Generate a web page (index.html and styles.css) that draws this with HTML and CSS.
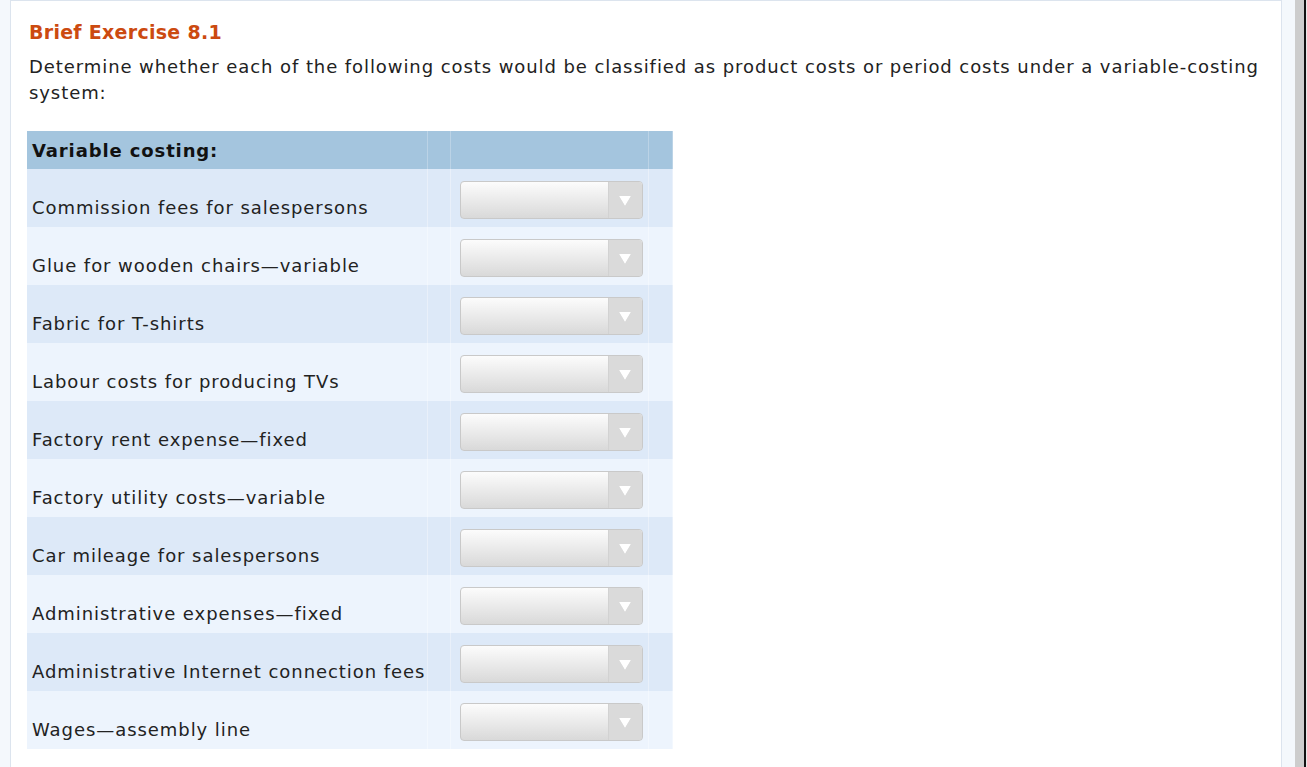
FILE: index.html
```html
<!DOCTYPE html>
<html>
<head>
<meta charset="utf-8">
<link rel="stylesheet" href="styles.css">
</head>
<body>
<div class="frame">
  <div class="panel">
    <h1 class="title">Brief Exercise 8.1</h1>
    <p class="intro">Determine whether each of the following costs would be classified as product costs or period costs under a variable-costing system:</p>
    <table class="grid">
      <thead>
        <tr><th class="c1">Variable costing:</th><th class="c2"></th><th class="c3"></th><th class="c4"></th></tr>
      </thead>
      <tbody>
        <tr><td class="c1">Commission fees for salespersons</td><td class="c2"></td><td class="c3"><div class="sel"><span class="arr"></span></div></td><td class="c4"></td></tr>
        <tr><td class="c1">Glue for wooden chairs—variable</td><td class="c2"></td><td class="c3"><div class="sel"><span class="arr"></span></div></td><td class="c4"></td></tr>
        <tr><td class="c1">Fabric for T-shirts</td><td class="c2"></td><td class="c3"><div class="sel"><span class="arr"></span></div></td><td class="c4"></td></tr>
        <tr><td class="c1">Labour costs for producing TVs</td><td class="c2"></td><td class="c3"><div class="sel"><span class="arr"></span></div></td><td class="c4"></td></tr>
        <tr><td class="c1">Factory rent expense—fixed</td><td class="c2"></td><td class="c3"><div class="sel"><span class="arr"></span></div></td><td class="c4"></td></tr>
        <tr><td class="c1">Factory utility costs—variable</td><td class="c2"></td><td class="c3"><div class="sel"><span class="arr"></span></div></td><td class="c4"></td></tr>
        <tr><td class="c1">Car mileage for salespersons</td><td class="c2"></td><td class="c3"><div class="sel"><span class="arr"></span></div></td><td class="c4"></td></tr>
        <tr><td class="c1">Administrative expenses—fixed</td><td class="c2"></td><td class="c3"><div class="sel"><span class="arr"></span></div></td><td class="c4"></td></tr>
        <tr><td class="c1">Administrative Internet connection fees</td><td class="c2"></td><td class="c3"><div class="sel"><span class="arr"></span></div></td><td class="c4"></td></tr>
        <tr><td class="c1">Wages—assembly line</td><td class="c2"></td><td class="c3"><div class="sel"><span class="arr"></span></div></td><td class="c4"></td></tr>
      </tbody>
    </table>
  </div>
  <div class="gutter"></div>
  <div class="scroll"></div>
  <div class="edge"></div>
  <div class="tail"></div>
</div>
</body>
</html>
```
FILE: styles.css
```css
html, body {
  margin: 0;
  padding: 0;
  background: #f4f8fc;
}
body {
  font-family: "DejaVu Sans", Verdana, sans-serif;
  color: #222;
}
.frame {
  display: flex;
  height: 767px;
  overflow: hidden;
  padding-left: 10px;
}
.panel {
  width: 1272px;
  flex: none;
  background: #fff;
  border: 1px solid #dce4ee;
  border-bottom: none;
  padding: 0 0 0 16px;
  box-sizing: border-box;
}
.gutter {
  width: 13px;
  flex: none;
  background: #f4f8fc;
}
.scroll {
  width: 9px;
  flex: none;
  background: #cdcdcd;
}
.edge {
  width: 2px;
  flex: none;
  background: #111;
}
.tail {
  width: 1px;
  flex: none;
  background: #e8e8e8;
}
.title {
  margin: 19px 0 0 2px;
  font-size: 19px;
  letter-spacing: 0.28px;
  font-weight: bold;
  color: #cc4a10;
  line-height: 24px;
}
.intro {
  margin: 10px 0 0 2px;
  font-size: 18px;
  letter-spacing: 0.92px;
  line-height: 26px;
  width: 1245px;
}
.grid {
  margin-top: 25px;
  border-collapse: collapse;
  font-size: 18px;
  letter-spacing: 0.94px;
}
.grid th {
  background: #a4c5de;
  height: 38px;
  padding: 0;
  text-align: left;
  font-weight: bold;
  color: #111;
  letter-spacing: 0.88px;
  box-shadow: inset -1px 0 0 rgba(255,255,255,0.25);
}
.grid th.c1 { padding-left: 5px; }
.grid td {
  height: 58px;
  padding: 0;
  box-shadow: inset -1px 0 0 rgba(255,255,255,0.35);
}
.grid tbody tr:nth-child(odd) td { background: #dde9f8; }
.grid tbody tr:nth-child(even) td { background: #edf4fd; }
.c1 { width: 396px; }
.grid td.c1 {
  padding-left: 5px;
  vertical-align: bottom;
  padding-bottom: 9px;
  height: 49px;
  color: #222;
}
.c2 { width: 23px; }
.c3 { width: 198px; }
.c4 { width: 24px; }
.grid td.c3 { vertical-align: middle; }
.sel {
  margin-left: 9px;
  width: 183px;
  height: 38px;
  box-sizing: border-box;
  border: 1px solid #c9c9c9;
  border-radius: 4px;
  background: linear-gradient(#fcfcfc, #d9d9d9);
  position: relative;
  margin-top: 4px;
}
.arr {
  position: absolute;
  right: 0;
  top: 0;
  bottom: 0;
  width: 33px;
  border-left: 1px solid #d2d2d2;
  background: #dadada;
  border-radius: 0 3px 3px 0;
}
.arr::after {
  content: "";
  position: absolute;
  left: 10px;
  top: 14px;
  border-left: 6px solid transparent;
  border-right: 6px solid transparent;
  border-top: 10px solid #fff;
  filter: drop-shadow(0 0 0.5px #bbb);
}
```
